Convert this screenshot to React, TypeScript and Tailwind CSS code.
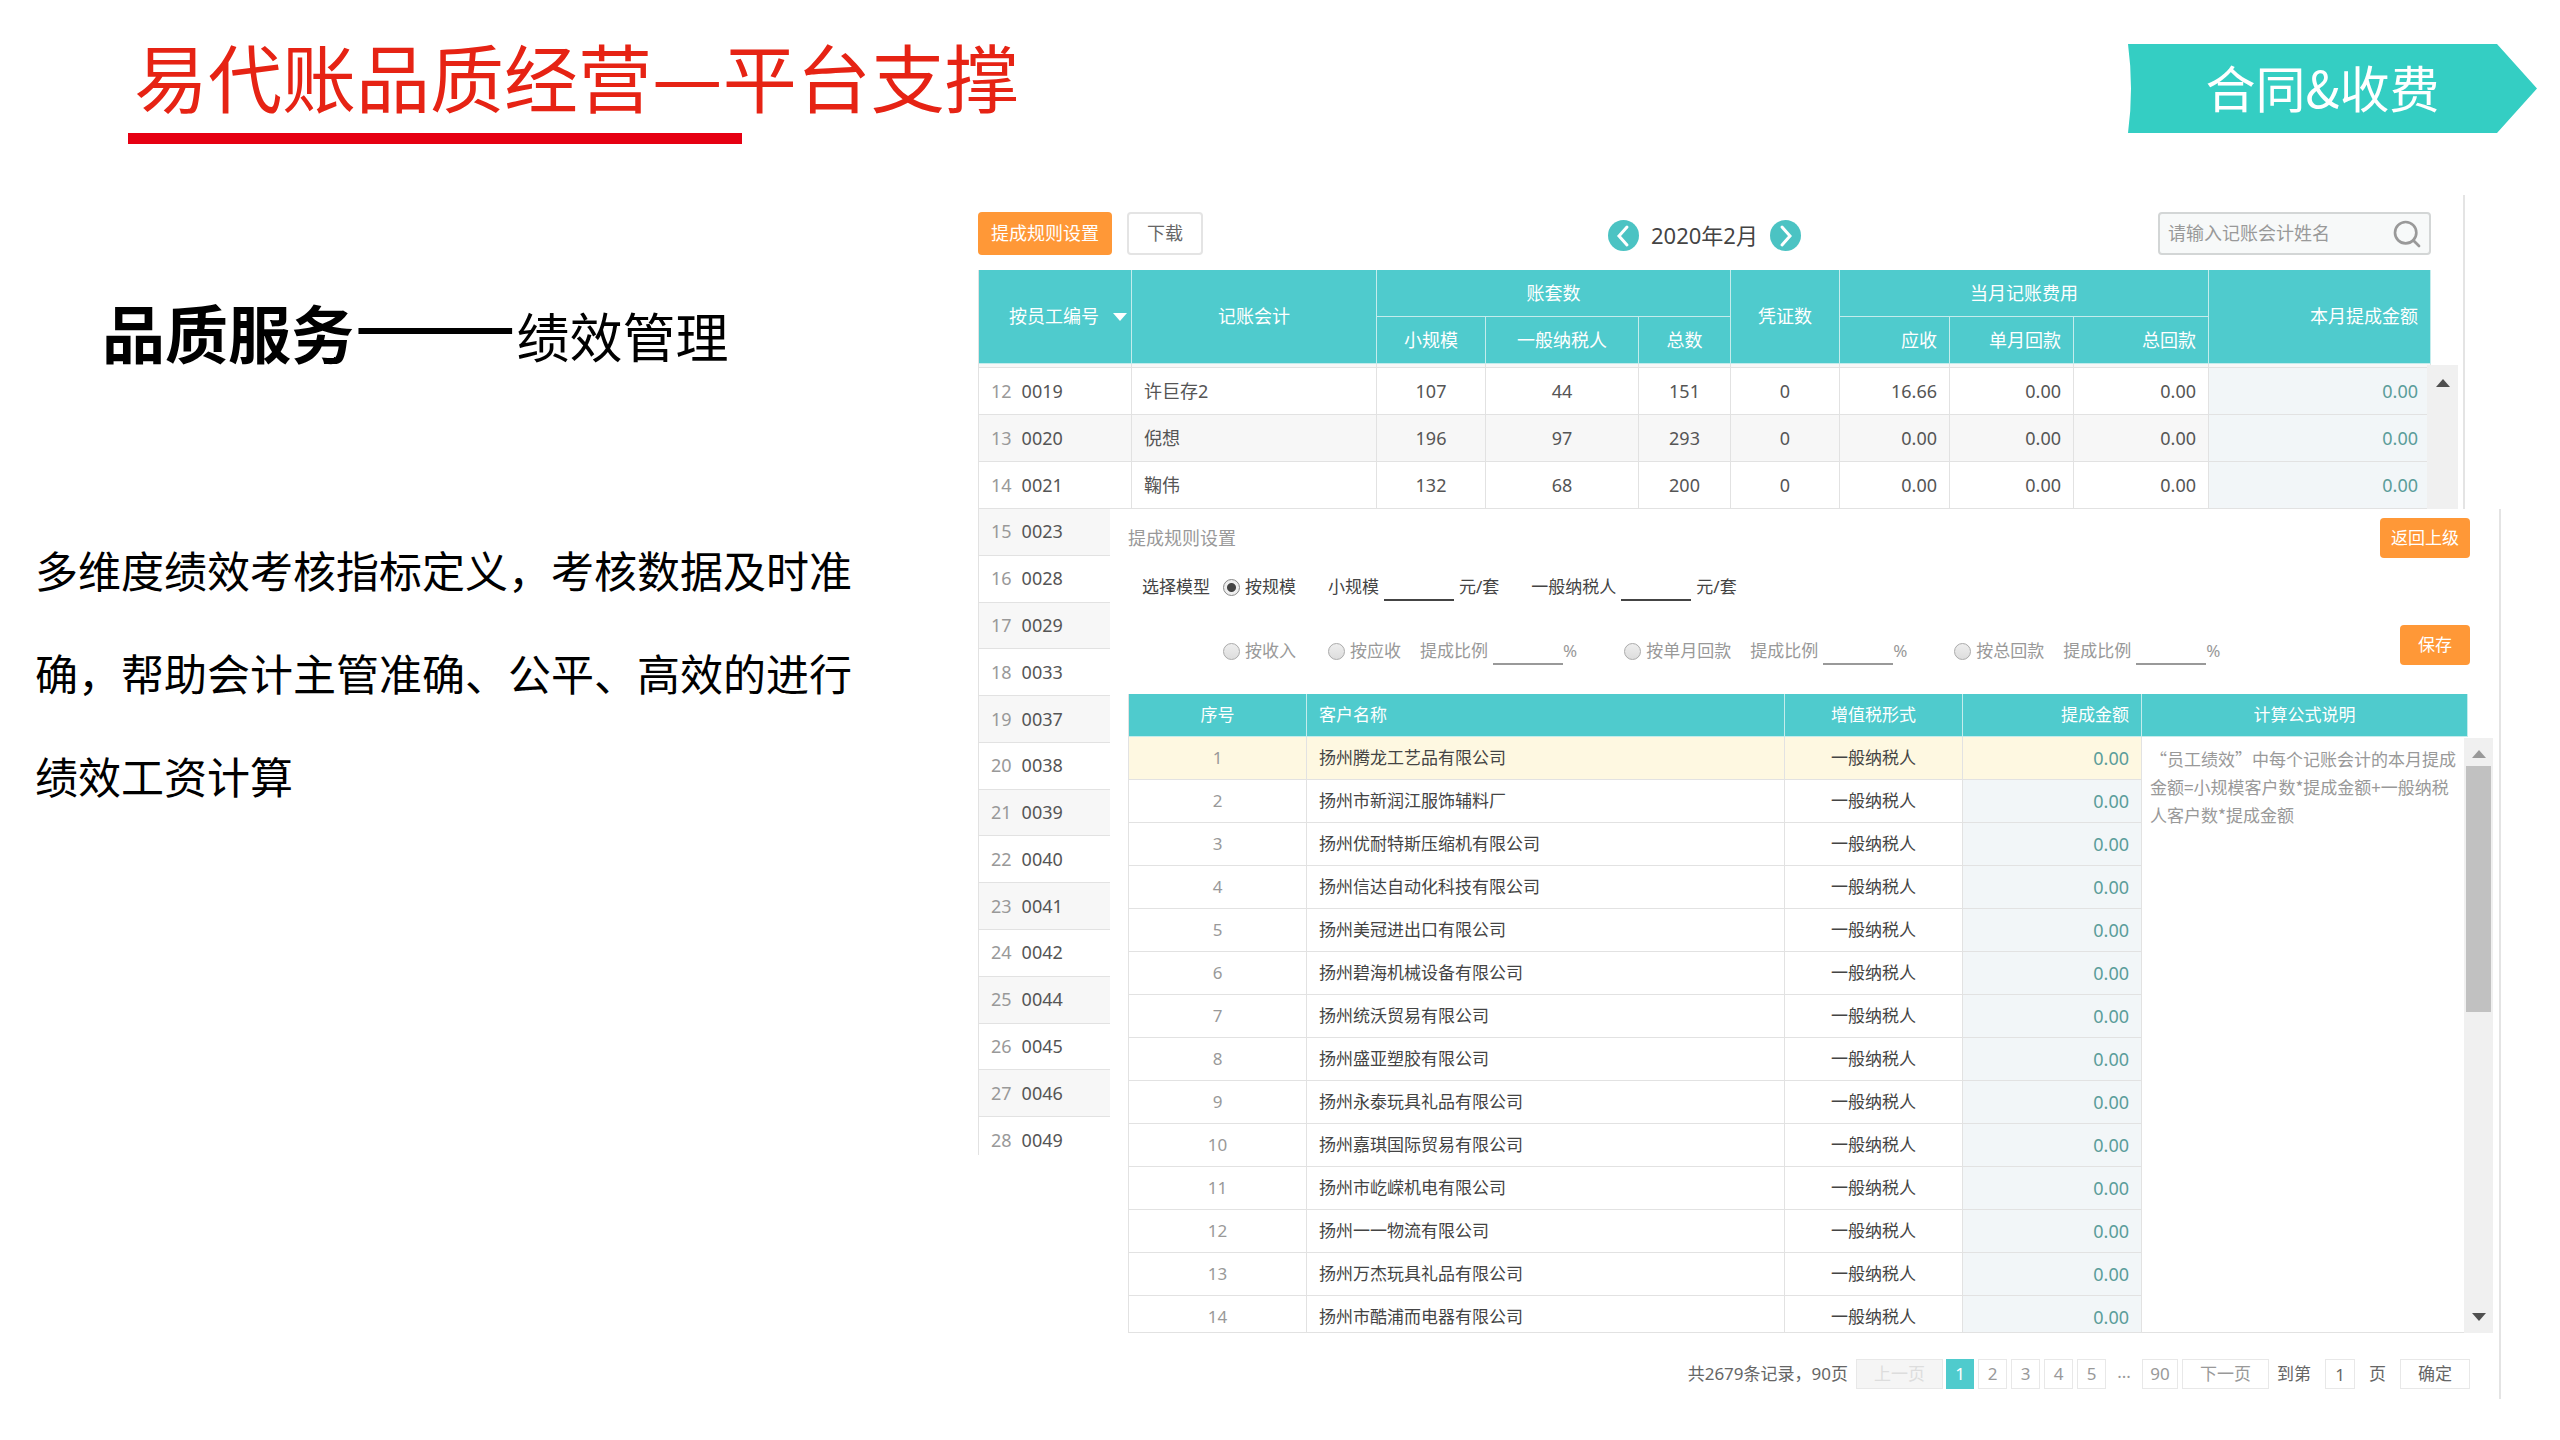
import { useState } from "react";
import { Search } from "lucide-react";
import clsx from "clsx";

const accountants = [
  { no: 12, code: "0019", name: "许巨存2", small: 107, general: 44, total: 151, due: "16.66" },
  { no: 13, code: "0020", name: "倪想", small: 196, general: 97, total: 293, due: "0.00" },
  { no: 14, code: "0021", name: "鞠伟", small: 132, general: 68, total: 200, due: "0.00" },
];

const codes = [
  "0023", "0028", "0029", "0033", "0037", "0038", "0039",
  "0040", "0041", "0042", "0044", "0045", "0046", "0049",
];

const customers = [
  "扬州腾龙工艺品有限公司",
  "扬州市新润江服饰辅料厂",
  "扬州优耐特斯压缩机有限公司",
  "扬州信达自动化科技有限公司",
  "扬州美冠进出口有限公司",
  "扬州碧海机械设备有限公司",
  "扬州统沃贸易有限公司",
  "扬州盛亚塑胶有限公司",
  "扬州永泰玩具礼品有限公司",
  "扬州嘉琪国际贸易有限公司",
  "扬州市屹嵘机电有限公司",
  "扬州一一物流有限公司",
  "扬州万杰玩具礼品有限公司",
  "扬州市酷浦而电器有限公司",
];

const th = "border-r border-b border-[#c4ecec] px-3 font-normal";
const td = "border-r border-b border-[#e2e2e2] px-3";

function Arrow({ up, className }: { up?: boolean; className?: string }) {
  return (
    <svg viewBox="0 0 14 8" className={clsx("h-2 w-3.5", className)} fill="currentColor" aria-hidden>
      <path d={up ? "M7 0l7 8H0z" : "M0 0h14L7 8z"} />
    </svg>
  );
}

function MonthButton({ label, next }: { label: string; next?: boolean }) {
  return (
    <button aria-label={label}>
      <svg viewBox="0 0 31 31" className="h-[31px] w-[31px]" fill="none" aria-hidden>
        <circle cx="15.500" cy="15.500" r="15.500" fill="#4bc3c3" />
        <path d={next ? "M12 7l8 9-8 9" : "M19 7l-8 9 8 9"} stroke="#fff" strokeWidth="3" strokeLinecap="round" />
      </svg>
    </button>
  );
}

function Header() {
  return (
    <header className="flex h-[195px] items-start justify-between pr-[23px] pl-[128px]">
      <div className="pt-[22px]">
        <h1 className="pl-1.5 text-[74px] leading-[106px] text-[#e62314]">
          易代账品质经营<span className="text-[79px] leading-none">—</span>平台支撑
        </h1>
        <div className="mt-[5px] h-[11px] w-[614px] bg-[#e60012]" />
      </div>
      <div className="relative mt-11 flex h-[89px] w-[409px] items-center justify-center pr-5 pb-1.5">
        <svg viewBox="0 0 409 89" className="absolute inset-0 h-full w-full" aria-hidden>
          <path d="M0 0H369L409 44.500L369 89H0Q6 44.500 0 0Z" fill="#34cec3" />
        </svg>
        <span className="relative text-[50px] leading-none text-white">合同&amp;收费</span>
      </div>
    </header>
  );
}

function Intro() {
  return (
    <section className="pl-[35px] text-black">
      <h2 className="flex h-[276px] items-baseline pt-[72px] pl-[67px] text-[53px] leading-none">
        <strong className="text-[63px] font-bold">品质服务</strong>
        <span className="text-[97px]">——</span>
        <span>绩效管理</span>
      </h2>
      <p className="mt-[47px] w-[820px] text-[43px] leading-[103px]">
        多维度绩效考核指标定义，考核数据及时准确，帮助会计主管准确、公平、高效的进行绩效工资计算
      </p>
    </section>
  );
}

function PerformancePanel() {
  return (
    <div className="mr-[95px] border-r-2 border-[#e4e4e4] pt-[17px] pr-8">
      <div className="flex h-[43px] items-center justify-between">
        <div className="flex gap-[15px]">
          <button className="h-[43px] w-[134px] rounded bg-[#ff9837] text-white">提成规则设置</button>
          <button className="h-[43px] w-[76px] rounded border-2 border-[#e4e4e4] text-[#666]">下载</button>
        </div>
        <div className="flex items-center gap-3 pt-1 pl-[48px] text-[22px] text-[#444]">
          <MonthButton label="上个月" />
          2020年2月
          <MonthButton label="下个月" next />
        </div>
        <div className="flex h-[43px] w-[273px] items-center rounded border-2 border-[#d3d6d6] bg-[#f7f9f9] pr-1.5 pl-2">
          <input
            aria-label="记账会计姓名"
            placeholder="请输入记账会计姓名"
            className="min-w-0 flex-1 bg-transparent outline-none placeholder:text-[#999]"
          />
          <Search className="h-8 w-8 text-[#999]" strokeWidth={2} />
        </div>
      </div>

      <div className="relative mt-[15px]">
        <table className="w-full table-fixed border-separate border-spacing-0 border-l border-[#e2e2e2] text-center text-[#555]">
          <colgroup>
            <col className="w-[153px]" />
            <col className="w-[245px]" />
            <col className="w-[109px]" />
            <col className="w-[153px]" />
            <col className="w-[92px]" />
            <col className="w-[109px]" />
            <col className="w-[110px]" />
            <col className="w-[124px]" />
            <col className="w-[135px]" />
            <col />
          </colgroup>
          <thead className="bg-[#4fcbcd] text-white">
            <tr className="h-[47px]">
              <th rowSpan={2} className={clsx(th, "pr-1 pl-[30px]")}>
                <button className="flex w-full items-center justify-between">
                  按员工编号
                  <Arrow />
                </button>
              </th>
              <th rowSpan={2} className={th}>记账会计</th>
              <th colSpan={3} className={th}>账套数</th>
              <th rowSpan={2} className={th}>凭证数</th>
              <th colSpan={3} className={th}>当月记账费用</th>
              <th rowSpan={2} className={clsx(th, "text-right")}>本月提成金额</th>
            </tr>
            <tr className="h-[47px]">
              <th className={th}>小规模</th>
              <th className={th}>一般纳税人</th>
              <th className={th}>总数</th>
              <th className={clsx(th, "text-right")}>应收</th>
              <th className={clsx(th, "text-right")}>单月回款</th>
              <th className={clsx(th, "text-right")}>总回款</th>
            </tr>
          </thead>
          <tbody>
            <tr className="h-1 bg-[#f8f8f8]">
              {Array.from({ length: 10 }, (_, i) => (
                <td key={i} className="border-r border-b border-[#e2e2e2]" />
              ))}
            </tr>
            {accountants.map((row, i) => (
              <tr key={row.no} className={clsx("h-[47px]", i % 2 && "bg-[#f7f7f7]")}>
                <td className={clsx(td, "text-left")}>
                  <span className="mr-2.5 text-[#999]">{row.no}</span>
                  {row.code}
                </td>
                <td className={clsx(td, "text-left")}>{row.name}</td>
                <td className={td}>{row.small}</td>
                <td className={td}>{row.general}</td>
                <td className={td}>{row.total}</td>
                <td className={td}>0</td>
                <td className={clsx(td, "text-right")}>{row.due}</td>
                <td className={clsx(td, "text-right")}>0.00</td>
                <td className={clsx(td, "text-right")}>0.00</td>
                <td className={clsx(td, "bg-[#f2f6f8] text-right text-[#5b9d9a]")}>0.00</td>
              </tr>
            ))}
          </tbody>
        </table>
        <div className="absolute top-[95px] -right-[27px] bottom-0 flex w-[31px] justify-center bg-[#f0f0f0] pt-3.5">
          <Arrow up className="text-[#505050]" />
        </div>
      </div>
    </div>
  );
}

function CodeList() {
  return (
    <div className="h-[646px] w-[132px] shrink-0 overflow-hidden">
      <table className="h-[655px] w-full border-separate border-spacing-0 border-l border-[#e2e2e2] text-[#555]">
        <tbody>
          {codes.map((code, i) => (
            <tr key={code} className={clsx(i % 2 === 0 && "bg-[#f7f7f7]")}>
              <td className="border-b border-[#e2e2e2] px-3">
                <span className="mr-2.5 text-[#999]">{i + 15}</span>
                {code}
              </td>
            </tr>
          ))}
        </tbody>
      </table>
    </div>
  );
}

type ModelRadioProps = { label: string; value: string; model: string; onPick: (v: string) => void };

function ModelRadio({ label, value, model, onPick }: ModelRadioProps) {
  return (
    <label className="flex items-center gap-[5px]">
      <input
        type="radio"
        name="model"
        value={value}
        checked={model === value}
        onChange={() => onPick(value)}
        className="h-[17px] w-[17px] appearance-none rounded-full border border-[#aaa] bg-linear-to-b from-[#eee] to-[#ddd] checked:border-[#888] checked:bg-[radial-gradient(circle,#444_0_4px,#eee_5px)]"
      />
      {label}
    </label>
  );
}

function AmountField({ label, unit, className }: { label: string; unit: string; className?: string }) {
  return (
    <label className={clsx("flex items-center", className)}>
      {label}
      <input className="ml-[5px] h-7 w-[70px] border-b-2 border-current bg-transparent text-center outline-none" />
      <span className={clsx(unit !== "%" && "ml-[5px]")}>{unit}</span>
    </label>
  );
}

function RulePanel() {
  const [model, setModel] = useState("scale");

  return (
    <div className="mr-[59px] flex-1 border-r-2 border-[#e4e4e4] pt-[9px] pr-[29px] pb-2.5 pl-[18px] text-[17px]">
      <div className="flex h-10 items-center justify-between">
        <h3 className="text-[18px] text-[#999]">提成规则设置</h3>
        <button className="h-10 w-[90px] rounded bg-[#ff9837] text-white">返回上级</button>
      </div>

      <div className="mt-[15px] flex h-7 items-center pl-3.5 text-[#444]">
        <span className="mr-[13px]">选择模型</span>
        <ModelRadio label="按规模" value="scale" model={model} onPick={setModel} />
        <AmountField label="小规模" unit="元/套" className="ml-8" />
        <AmountField label="一般纳税人" unit="元/套" className="ml-8" />
      </div>

      <div className="mt-6 flex items-end justify-between pl-[95px] text-[#999]">
        <div className="flex h-7 items-center">
          <ModelRadio label="按收入" value="income" model={model} onPick={setModel} />
          <div className="ml-8 flex">
            <ModelRadio label="按应收" value="due" model={model} onPick={setModel} />
            <AmountField label="提成比例" unit="%" className="ml-[19px]" />
          </div>
          <div className="ml-[47px] flex">
            <ModelRadio label="按单月回款" value="month" model={model} onPick={setModel} />
            <AmountField label="提成比例" unit="%" className="ml-[19px]" />
          </div>
          <div className="ml-[47px] flex">
            <ModelRadio label="按总回款" value="total" model={model} onPick={setModel} />
            <AmountField label="提成比例" unit="%" className="ml-[19px]" />
          </div>
        </div>
        <button className="h-10 w-[70px] rounded bg-[#ff9837] text-white">保存</button>
      </div>

      <div className="relative mt-[29px] mr-0.5">
        <div className="h-[639px] overflow-hidden border-b border-[#e2e2e2]">
          <table className="w-full table-fixed border-separate border-spacing-0 border-l border-[#e2e2e2] text-center text-[#444]">
            <colgroup>
              <col className="w-[178px]" />
              <col />
              <col className="w-[178px]" />
              <col className="w-[179px]" />
              <col className="w-[326px]" />
            </colgroup>
            <thead className="bg-[#4fcbcd] text-white">
              <tr className="h-[43px]">
                <th className={th}>序号</th>
                <th className={clsx(th, "text-left")}>客户名称</th>
                <th className={th}>增值税形式</th>
                <th className={clsx(th, "text-right")}>提成金额</th>
                <th className={th}>计算公式说明</th>
              </tr>
            </thead>
            <tbody>
              {customers.map((name, i) => (
                <tr key={name} className={clsx("h-[43px]", i === 0 && "bg-[#fef8e1]")}>
                  <td className={clsx(td, "text-[#999]")}>{i + 1}</td>
                  <td className={clsx(td, "text-left")}>{name}</td>
                  <td className={td}>一般纳税人</td>
                  <td className={clsx(td, "text-right text-[18px] text-[#5b9d9a]", i > 0 && "bg-[#f2f6f8]")}>0.00</td>
                  {i === 0 && (
                    <td
                      rowSpan={customers.length}
                      className="bg-white pt-2 pr-2 pl-2 text-left align-top font-['Noto_Sans_CJK_SC',sans-serif] leading-7 text-[#999]"
                    >
                      “员工绩效”中每个记账会计的本月提成金额=小规模客户数*提成金额+一般纳税人客户数*提成金额
                    </td>
                  )}
                </tr>
              ))}
            </tbody>
          </table>
        </div>
        <div className="absolute top-11 -right-[25px] bottom-0 flex w-[29px] flex-col items-center bg-[#f0f0f0] py-3">
          <Arrow up className="text-[#999]" />
          <div className="mt-2 h-[246px] w-[25px] bg-[#c1c1c1]" />
          <Arrow className="mt-auto text-[#505050]" />
        </div>
      </div>

      <Pagination />
    </div>
  );
}

function Pagination() {
  const box = "h-[30px] border border-[#e8e8e8]";

  return (
    <nav className="mt-[26px] flex items-center justify-end text-[#666]">
      <span className="mr-2">共2679条记录，90页</span>
      <button disabled className={clsx(box, "mr-[3px] w-[87px] bg-[#f5f5f5] text-[#ddd]")}>上一页</button>
      <div className="flex gap-1 text-[#999]">
        <button className="h-[30px] w-7 bg-[#4fcbcd] text-white">1</button>
        {[2, 3, 4, 5].map((page) => (
          <button key={page} className={clsx(box, "w-[29px]")}>{page}</button>
        ))}
        <span className="w-7 text-center">...</span>
        <button className={clsx(box, "w-9")}>90</button>
        <button className={clsx(box, "w-[87px]")}>下一页</button>
      </div>
      <label className="ml-2 flex items-center">
        到第
        <input defaultValue="1" className={clsx(box, "mx-3.5 w-[30px] text-center outline-none")} />
        页
      </label>
      <button className={clsx(box, "ml-3.5 w-[70px]")}>确定</button>
    </nav>
  );
}

export default function App() {
  return (
    <div className="min-h-screen bg-white font-['Noto_Sans_CJK_SC',sans-serif]">
      <Header />
      <main className="grid grid-cols-[978fr_1582fr]">
        <Intro />
        <section className="font-['Noto_Sans','Noto_Sans_CJK_SC',sans-serif] text-[18px]">
          <PerformancePanel />
          <div className="flex items-start">
            <CodeList />
            <RulePanel />
          </div>
        </section>
      </main>
    </div>
  );
}
